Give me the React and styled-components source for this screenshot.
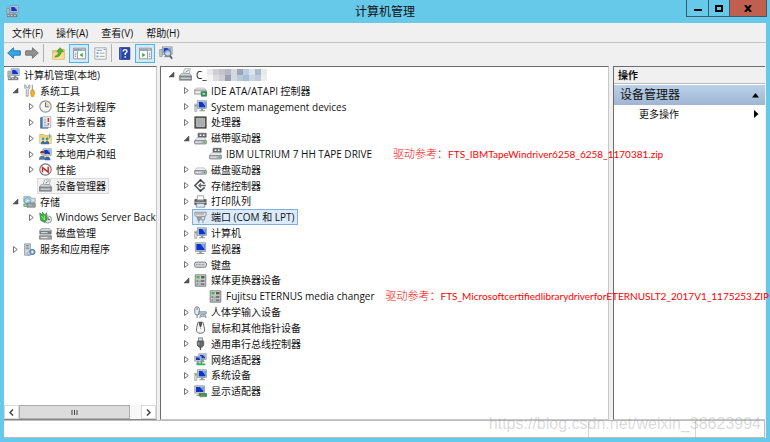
import React from "react";
import styled, { createGlobalStyle, css } from "styled-components";

const uiFont = `"Open Sans", "Noto Sans CJK SC", sans-serif`;

const GlobalStyle = createGlobalStyle`
  * { box-sizing: border-box; }
  html, body, #root { height: 100%; }
  body {
    margin: 0;
    background: #67c9ea;
    color: #111;
    font: 10px/14px ${uiFont};
  }
  button {
    margin: 0;
    padding: 0;
    border: 0;
    background: none;
    color: inherit;
    font: inherit;
  }
  ul { margin: 0; padding: 0; list-style: none; }
  svg { display: block; }
`;

/* ---------- icons ---------- */

const Svg = styled.svg.attrs({ viewBox: "0 0 16 16" })`
  flex: none;
  width: ${(p) => p.$size || 13}px;
  height: ${(p) => p.$size || 13}px;
`;

const Screen = ({ x = 4, y = 1, w = 11, h = 9 }) => (
  <g>
    <rect x={x} y={y} width={w} height={h} fill="#c9d3dc" stroke="#7d8b98" strokeWidth=".8" />
    <rect x={x + 1.4} y={y + 1.4} width={w - 2.8} height={h - 2.8} fill="#1233c4" />
    <path d={`M${x + w / 2} ${y + 1.4}h${w / 2 - 1.4}v${h - 4}z`} fill="#7fa8f2" />
    <path d={`M${x + w / 2 - 1.5} ${y + h}h3v2h-3zM${x + 2} ${y + h + 2}h${w - 4}v1.4h-${w - 4}z`} fill="#8d98a3" />
  </g>
);

const Drive = ({ y = 7 }) => (
  <g>
    <path d={`M3.5 ${y}h9l3 3.5h-15z`} fill="#f0f1f2" stroke="#9a9d9f" strokeWidth=".7" />
    <rect x=".5" y={y + 3.3} width="15" height="4.5" rx="1.4" fill="#b6babd" stroke="#6f7275" strokeWidth=".8" />
    <rect x="2" y={y + 5} width="7" height="1" fill="#eee" />
    <rect x="11.5" y={y + 4.8} width="2.4" height="1.5" fill="#4fae4a" />
  </g>
);

const drawings = {
  console: (
    <>
      <Screen x={5} y={1} w={10} h={8} />
      <path d="M1 4h3v7H1z" fill="#b8c2cb" stroke="#6d7780" strokeWidth=".7" />
      <path d="M1 11.5h13V15H1z" fill="#7d8084" />
      <path d="M2 13h2M6 13h2M10 13h2" stroke="#e8e8e8" />
    </>
  ),
  tools: (
    <>
      <path d="M2 1v4l2 2v8h2.5V7l2-2V1L7 2v2.5H4V2z" fill="#e6e9eb" stroke="#7d8489" strokeWidth=".8" />
      <path d="M11.5 1v7" stroke="#9aa0a5" strokeWidth="1.4" />
      <path d="M10 7.5h3.4l.8 3-1 4.8h-3l-.8-4.8z" fill="#f3b32c" stroke="#bd7c12" strokeWidth=".7" />
    </>
  ),
  clock: (
    <>
      <circle cx="8" cy="8" r="7" fill="#f8f7ef" stroke="#8f989f" strokeWidth="1.4" />
      <path d="M8 8h5.5A5.5 5.5 0 0 0 8 2.5z" fill="#f2d9a0" />
      <path d="M8 3v5.4h4" fill="none" stroke="#436d9c" strokeWidth="1.2" />
    </>
  ),
  events: (
    <>
      <path d="M2 2h9v13H2z" fill="#4f7fb8" stroke="#2d527f" strokeWidth=".8" />
      <path d="M4.5 1h10v13h-10z" fill="#f3f6f9" stroke="#7e8c9b" strokeWidth=".8" />
      <path d="M10.5 2.5h2v5h-2zM10.5 8.8h2v2h-2z" fill="#d42f28" />
      <path d="M6 4h3M6 6h3M6 8h3M6 10h3M6 12h6" stroke="#7995b8" strokeWidth=".9" />
    </>
  ),
  share: (
    <>
      <path d="M1 3h5l1.5 1.5H15V14H1z" fill="#f3d374" stroke="#c19a32" strokeWidth=".8" />
      <path d="M1.5 7h13V14h-13z" fill="#fae7a0" />
      <circle cx="5" cy="8.5" r="1.8" fill="#4a8ed1" />
      <circle cx="10" cy="8.5" r="1.8" fill="#4d9a57" />
      <path d="M2.5 15v-2.5l2.5-2 2.5 2V15zM7.5 15v-2.5l2.5-2 2.5 2V15z" fill="#3e709f" />
      <path d="M13 2v6" stroke="#70a3d3" strokeWidth="1.4" />
    </>
  ),
  users: (
    <>
      <Screen x={5} y={1} w={10} h={8} />
      <circle cx="4" cy="6.5" r="2.5" fill="#e0b084" />
      <path d="M1.5 6Q1.5 3.5 4 3.5T6.5 6z" fill="#5a4131" />
      <path d="M0 14.5q0-5 4-5t4 5z" fill="#4e7f9e" />
      <circle cx="10.5" cy="9" r="2" fill="#e7c197" />
      <path d="M7 15q0-4 3.5-4t3.5 4z" fill="#3565a8" />
    </>
  ),
  perf: (
    <>
      <circle cx="8" cy="8" r="7" fill="#fff" stroke="#76797c" strokeWidth="1.4" />
      <path d="M4.3 11.5v-6l7 5.8V4.5" fill="none" stroke="#d32222" strokeWidth="1.8" />
    </>
  ),
  devices: (
    <>
      <path d="M5 6l2-5h7l-1.5 6z" fill="#f2f4f5" stroke="#8e9599" strokeWidth=".8" />
      <path d="M8 5l4-2.5" stroke="#5fae64" strokeWidth="1.2" />
      <path d="M2.5 7h11l2 3H.5z" fill="#dadde0" stroke="#7b7f83" strokeWidth=".7" />
      <path d="M.5 10h15v5H.5z" fill="#8d9296" stroke="#5f6468" strokeWidth=".7" />
      <path d="M2 12.5h12" stroke="#e5e7e8" strokeWidth="1.2" />
    </>
  ),
  storage: (
    <>
      <path d="M1 2h8l1 2h5v5H1z" fill="#d7dde2" stroke="#828b93" strokeWidth=".8" />
      <circle cx="5.5" cy="7" r="4" fill="#9cd3ea" stroke="#5f8fa5" strokeWidth=".8" />
      <circle cx="5.5" cy="7" r="1.1" fill="#fff" />
      <path d="M5 10h10v5H5z" fill="#a6abaf" stroke="#5f6468" strokeWidth=".8" />
      <path d="M1 11h4v3H1zM11 12.2h2.6" fill="#bcc" stroke="#4da05a" />
    </>
  ),
  backup: (
    <>
      <circle cx="11" cy="10.5" r="4.5" fill="#dfe4e7" stroke="#7e868b" strokeWidth=".9" />
      <path d="M11 7.5v3h2.5" fill="none" stroke="#555" />
      <path d="M.8 2.5l3.4 2V1.2l3 4L9.5 2v9.5L6.5 14 2 11.5z" fill="#3fae3e" stroke="#1f7b26" strokeWidth=".7" />
      <path d="M3 6l3.6 5V5.5" fill="none" stroke="#a9e59d" />
    </>
  ),
  disk: (
    <>
      <path d="M3 2h10l2.5 3H.5z" fill="#dde0e2" stroke="#777b7e" strokeWidth=".8" />
      <path d="M.5 5h15v4H.5z" fill="#77797c" />
      <path d="M3 9h10l2.5 2H.5z" fill="#e7e9ea" stroke="#888" strokeWidth=".6" />
      <path d="M.5 11h15v4H.5z" fill="#a2a5a7" stroke="#666" strokeWidth=".7" />
      <path d="M2.5 7h8M2.5 13h8" stroke="#eee" strokeWidth="1.2" />
    </>
  ),
  services: (
    <>
      <path d="M2 1h7v14H2z" fill="#cfdae3" stroke="#768692" strokeWidth=".9" />
      <path d="M3.5 3h4M3.5 5h4M3.5 7h4" stroke="#6b7f8f" />
      <circle cx="11.5" cy="11" r="3" fill="#a8c9e6" stroke="#4f7aa4" strokeWidth="1.4" />
      <circle cx="11.5" cy="11" r="1" fill="#fff" />
      <circle cx="7" cy="13" r="1.8" fill="#d7e3ec" stroke="#64839f" strokeWidth=".8" />
    </>
  ),
  ide: (
    <>
      <path d="M3 5h9l3 2.5H.5z" fill="#f2f2f2" stroke="#999" strokeWidth=".7" />
      <path d="M.5 7.5H15v5H.5z" fill="#ccced0" stroke="#85888a" strokeWidth=".8" />
      <path d="M2 10h6" stroke="#fff" strokeWidth="1.3" />
      <path d="M9 9.5h6.5V15H9z" fill="#2f9a57" stroke="#17653a" strokeWidth=".7" />
      <path d="M10.5 11h3v2h-3z" fill="#b0e4c2" />
    </>
  ),
  computer: (
    <>
      <Screen x={4.5} y={1} w={11} h={9.5} />
      <path d="M.8 5h2.8v9H.8z" fill="#d7dadd" stroke="#8e979e" strokeWidth=".7" />
      <path d="M1.2 7h2" stroke="#3aa646" strokeWidth="1.4" />
    </>
  ),
  cpu: (
    <>
      <path d="M.5 .5h15v15H.5z" fill="#3f3f3f" />
      <path d="M1.5 2v12M14.5 2v12M2 1.5h12M2 14.5h12" stroke="#8d8564" strokeDasharray="1 1" strokeWidth=".8" />
      <path d="M3 3h10v10H3z" fill="#a9adb0" stroke="#dcdcdc" strokeWidth=".8" />
    </>
  ),
  tape: (
    <>
      <path d="M5 1.5h10v5H5z" fill="#6c6f72" stroke="#4d5053" strokeWidth=".7" />
      <path d="M7 3h2v2H7zM11 3h2v2h-2z" fill="#fff" />
      <Drive y={7} />
    </>
  ),
  hdd: <Drive y={6} />,
  controller: (
    <>
      <path d="M13 5.8L8 1.2 1.2 8 8 14.8l5-4.6" fill="none" stroke="#55585a" strokeWidth="2" />
      <path d="M6 8h8.5M8.5 5.5L6 8l2.5 2.5" fill="none" stroke="#66696b" strokeWidth="1.6" />
      <path d="M7 .7h2v2.5H7zM7 12.8h2v2.5H7z" fill="#333" />
    </>
  ),
  printer: (
    <>
      <path d="M4 1h8v5H4z" fill="#fff" stroke="#777" strokeWidth=".8" />
      <path d="M1 5.5h2.5V7h9V5.5H15V12H1z" fill="#5d6164" stroke="#3f4244" strokeWidth=".7" />
      <path d="M1.5 9h13" stroke="#c7c9cb" strokeWidth="1.3" />
      <path d="M3.5 10.5h9l1 4.5h-11z" fill="#d5ecf5" stroke="#777" strokeWidth=".8" />
    </>
  ),
  port: (
    <>
      <path d="M1 1.5h14v3.5l-2 2.500H3L1 5z" fill="#d8dadc" stroke="#7c8083" strokeWidth=".9" />
      <path d="M3 3.500h1.200M5.500 3.500h1.200M8 3.500h1.200M10.500 3.500h1.200" stroke="#555" strokeWidth="1.200" />
      <path d="M4 7.500h4l-.6 4H4.800zM6 11.500V15" fill="#a6aaad" stroke="#7c8083" />
      <path d="M8.500 7h5l-.8 4h-3.400zM11 11v4" fill="#dfe2e4" stroke="#84898c" />
    </>
  ),
  monitor: <Screen x={1.5} y={1} w={13} h={10.5} />,
  keyboard: (
    <>
      <rect x=".6" y="5" width="14.8" height="6.5" rx="2.500" fill="#d5d7da" stroke="#686c70" strokeWidth="1" />
      <path d="M2.5 8.200h11" stroke="#9a9a9a" strokeWidth="1.500" strokeDasharray="1.2 .6" />
    </>
  ),
  changer: (
    <>
      <path d="M1.5 1h13v14h-13z" fill="#d9dcda" stroke="#65696a" strokeWidth="1" />
      <path d="M3 2.5h4v3H3z" fill="#45b04b" />
      <path d="M8.5 2.5H13v3H8.5z" fill="#56595b" />
      <path d="M3 7h10v3H3zM3 11.3h10v2.4H3z" fill="#76797b" />
      <path d="M4.5 8.5h4M4.5 12.5h4" stroke="#fff" />
    </>
  ),
  hid: (
    <>
      <rect x="1" y="1" width="5.5" height="10" rx="2.6" fill="#e9edf0" stroke="#5f6e7b" strokeWidth="1" />
      <path d="M3.8 2v3M3.8 11v4" stroke="#5f6e7b" />
      <path d="M6 7h9v3H6z" fill="#b8c7d6" stroke="#63748a" strokeWidth=".8" />
      <path d="M7 14.5q0-3.5 2.5-3.5h3q2.5 0 2.5 3.5l-2-1.5H9z" fill="#dbe3ea" stroke="#5d7388" strokeWidth=".8" />
    </>
  ),
  mouse: (
    <>
      <path d="M5 1.5Q3 8 3 11q0 4 5 4t5-4q0-3-2-9.5" fill="#f5f5f5" stroke="#6c6c6c" strokeWidth="1.2" />
      <path d="M6 1l1.5 6h1L10 1" fill="#555" stroke="#444" />
      <path d="M8 8v2" stroke="#999" />
    </>
  ),
  usb: (
    <>
      <path d="M5.5 1h5v4h-5z" fill="#d5d7d9" stroke="#6a6d70" strokeWidth=".9" />
      <path d="M4 5h8v5l-2 2.5H6L4 10z" fill="#66696c" stroke="#484b4d" strokeWidth=".8" />
      <path d="M8 12v4" stroke="#54575a" strokeWidth="1.6" />
      <path d="M6 6.5v3" stroke="#b4b7ba" />
    </>
  ),
  network: (
    <>
      <Screen x={6} y={1} w={9} h={7} />
      <Screen x={1} y={4} w={8} h={6} />
      <path d="M9 10v4M3 14h11" stroke="#35b254" strokeWidth="2" />
    </>
  ),
  display: (
    <>
      <Screen x={1} y={1} w={12} h={9} />
      <path d="M7 10.5h8.5V14H7z" fill="#3a9b58" stroke="#1e6339" strokeWidth=".7" />
      <path d="M9 11.5h2v1.5H9zM8 14v1.5M10 14v1.5M12 14v1.5" fill="#222" stroke="#b79b41" strokeWidth=".8" />
    </>
  ),
  back: <path d="M.8 8L7.5 2v3.5h7.7v5H7.5V14z" fill="#35a5e4" stroke="#1976b6" />,
  forward: <path d="M15.2 8L8.5 2v3.5H.8v5h7.7V14z" fill="#929292" stroke="#6c6c6c" />,
  up: (
    <>
      <path d="M1 4.5h5L7.5 3H15v12H1z" fill="#f1cf74" stroke="#c49a3c" strokeWidth=".8" />
      <path d="M1.5 7.5h13V15h-13z" fill="#f8df96" />
      <path d="M4 11q4-1 4.5-5.5H6L10 .8l4 4.7h-2.5Q11 12 4 12.5z" fill="#4fb83a" stroke="#2b8225" strokeWidth=".7" />
    </>
  ),
  paneLeft: (
    <>
      <path d="M.5 1.5h15v13H.5z" fill="#fff" stroke="#7b8792" />
      <path d="M1 2h14v3H1z" fill="#98a5b2" />
      <path d="M11 3.5h1M13 3.5h1" stroke="#fff" />
      <path d="M5.5 5v9" stroke="#7b8792" />
      <path d="M2 7.5h2M2 9.5h2M2 11.5h2" stroke="#4c83ba" />
      <path d="M12 7v5.5L8 9.7z" fill="#42ad38" />
    </>
  ),
  paneRight: (
    <>
      <path d="M.5 1.5h15v13H.5z" fill="#fff" stroke="#7b8792" />
      <path d="M1 2h14v3H1z" fill="#98a5b2" />
      <path d="M11 3.5h1M13 3.5h1" stroke="#fff" />
      <path d="M10.5 5v9" stroke="#7b8792" />
      <path d="M12 7.5h2M12 9.5h2M12 11.5h2" stroke="#4c83ba" />
      <path d="M4 7v5.5l4-2.8z" fill="#42ad38" />
    </>
  ),
  properties: (
    <>
      <path d="M1 1h14v14H1z" fill="#fafbfb" stroke="#939ba2" />
      <path d="M3 4h7" stroke="#829bb5" strokeWidth="1.2" />
      <path d="M3 6.5h2.5v2H3zM3 10.5h2.5v2H3z" fill="#73a3cf" />
      <path d="M7 7.5h6M7 11.5h6" stroke="#99a2ab" strokeWidth="1.2" />
      <path d="M12 3h2" stroke="#777" />
    </>
  ),
  help: (
    <>
      <path d="M2 .8h12.5v14.4H2z" fill="#2747ad" stroke="#172e7d" />
      <path d="M3.5 1v14" stroke="#7e98dc" />
      <path d="M6.5 5.5q0-2.3 2.3-2.3t2.3 2q0 1.6-2.2 2.8v1.8" fill="none" stroke="#fff" strokeWidth="1.7" />
      <path d="M8 11.5h1.8v1.7H8z" fill="#fff" />
    </>
  ),
  scan: (
    <>
      <Screen x={4} y={1} w={11} h={8.5} />
      <path d="M.8 4h2.8v8H.8z" fill="#c4cad0" stroke="#7c858d" strokeWidth=".7" />
      <circle cx="10" cy="8" r="3.5" fill="#cfe6f5" fillOpacity=".8" stroke="#747d85" strokeWidth="1.2" />
      <path d="M12.5 11l2.5 3.5" stroke="#5c6165" strokeWidth="2" />
    </>
  ),
};

const Icon = ({ name, size }) => (
  <Svg $size={size} aria-hidden="true">
    {drawings[name]}
  </Svg>
);

/* ---------- window frame ---------- */

const Window = styled.div`
  display: flex;
  flex-direction: column;
  min-height: 100%;
  padding: 0 4px 4px;
  background: #67c9ea;
`;

const TitleBar = styled.header`
  display: grid;
  grid-template-columns: 1fr auto 1fr;
  height: 23px;
`;

const TitleIcon = styled.span`
  align-self: center;
  padding-left: 2px;
`;

const Title = styled.h1`
  margin: 0;
  font-size: 12px;
  line-height: 23px;
  font-weight: 400;
`;

const WindowButtons = styled.div`
  display: flex;
  justify-self: end;
  height: 17px;
  margin-right: -1px;
  border: 1px solid #3c5a68;
  border-top: 0;
`;

const WindowButton = styled.button`
  display: grid;
  place-items: center;
  width: ${(p) => (p.$close ? 37 : 21)}px;
  background: ${(p) => (p.$close ? "#c05f50" : "transparent")};
  & + & {
    border-left: 1px solid #3c5a68;
  }
`;

const Client = styled.div`
  flex: 1;
  display: flex;
  flex-direction: column;
  background: #f0f0f0;
`;

const MenuBar = styled.nav`
  display: flex;
  gap: 13px;
  height: 20px;
  padding-left: 8px;
  border-bottom: 1px solid #c4c4c4;
`;

const MenuItem = styled.button`
  line-height: 18px;
`;

const ToolBar = styled.div`
  display: flex;
  align-items: center;
  gap: 4px;
  height: 23px;
  padding: 0 3px 3px;
`;

const ToolButton = styled.button`
  display: grid;
  place-items: center;
  width: ${(p) => (p.$on ? 20 : 14)}px;
  height: 19px;
  ${(p) =>
    p.$on &&
    css`
      background: #d3e9f8;
      border: 1px solid #52b4e4;
    `}
`;

const Divider = styled.span`
  width: 1px;
  height: 18px;
  margin-right: ${(p) => p.$gap}px;
  background: #b0b0b0;
`;

/* ---------- panes ---------- */

const Panes = styled.main`
  flex: 1;
  display: grid;
  grid-template-columns: 153px minmax(0, 1fr) 153px;
  column-gap: 3px;
  padding-right: 1px;
`;

const Pane = styled.section`
  display: flex;
  flex-direction: column;
  min-width: 0;
  background: #fff;
  border: 1px solid #c8c8c8;
  border-top-color: #6c6c6c;
  border-left-color: #6c6c6c;
  ${(p) => p.$first && "overflow: hidden; border-left: 0; border-bottom-color: #888;"}
  ${(p) => p.$last && "margin-left: 1px; border-right: 0;"}
`;

// rows share the height of the list evenly
const Tree = styled.ul`
  display: flex;
  flex-direction: column;
  height: ${(p) => p.$height}px;
`;

const Row = styled.li`
  flex: 1 1 0;
  min-height: 0;
  display: flex;
  align-items: center;
  padding-left: ${(p) => p.$indent}px;
  white-space: nowrap;
`;

const Expander = styled.button`
  flex: none;
  display: grid;
  place-items: center;
  width: 8px;
  height: 12px;
  margin-right: 2px;
`;

const Spacer = styled.span`
  flex: none;
  width: 10px;
`;

const Item = styled.span`
  flex: none;
  display: flex;
  align-items: center;
  gap: 4px;
  height: 16px;
  padding: 0 2px 0 1px;
  border: 1px solid transparent;
  ${(p) => p.$tone === "gray" && "background: #f2f2f2; border-color: #dcdcdc;"}
  ${(p) => p.$tone === "blue" && "background: #dcebfc; border-color: #84acdd;"}
`;

const Masked = styled.span`
  display: flex;
  align-items: center;
`;

const Note = styled.span`
  position: relative;
  z-index: 2;
  margin-left: ${(p) => p.$gap}px;
  color: #f00;
  font: 300 11px/14px Lato, "Noto Sans CJK SC", sans-serif;
`;

const NoteFile = styled.span`
  font-size: 10px;
  font-weight: 400;
`;

const Scroll = styled.div`
  display: flex;
  height: 14px;
  margin-top: auto;
  background: #f8f8f8;
`;

const ScrollButton = styled.button`
  display: grid;
  place-items: center;
  width: 15px;
  border: 1px solid #dadada;
  background: #fff;
`;

const Track = styled.div`
  flex: 1;
  display: flex;
`;

const Thumb = styled.div`
  display: grid;
  place-items: center;
  width: 91%;
  background: #dcdcdc;
  border: 1px solid #adadad;
`;

const ActionsHead = styled.h2`
  margin: 0;
  padding-left: 4px;
  height: 17px;
  font-size: 10px;
  line-height: 16px;
  background: #f0f0f0;
  border-bottom: 1px solid #bbb;
`;

const ActionButton = styled.button`
  display: flex;
  align-items: center;
  justify-content: space-between;
  padding: 0 6px 0 25px;
  height: 18px;
  ${(p) =>
    p.$group &&
    css`
      height: 20px;
      margin-top: 1px;
      padding-left: 6px;
      font-size: 12px;
      background: linear-gradient(#b9d1ea, #9fb5d1);
    `}
`;

const StatusBar = styled.footer`
  position: relative;
  display: grid;
  grid-template-columns: minmax(0, 1fr) 107px 69px;
  height: 18px;
  margin-right: 1px;
  background: #fff;
  border: 1px solid #bdbdbd;
  border-left: 0;
`;

const StatusCell = styled.span`
  & + & {
    border-left: 1px solid #d5d5d5;
  }
`;

const Watermark = styled.span`
  position: absolute;
  right: 3px;
  bottom: 3px;
  color: rgba(150, 150, 150, 0.35);
  font: 16px/20px "Liberation Sans", sans-serif;
  white-space: nowrap;
`;

const Mosaic = () => (
  <svg width="60" height="12" viewBox="0 0 60 12" shapeRendering="crispEdges" aria-hidden="true">
    {[
      ["#e9e9ee", "#f5f5f5"],
      ["#cfcfd3", "#dcdcdc"],
      ["#c2c5cc", "#cfcdd6"],
      ["#b4b8c6", "#9c9fb2"],
      ["#d2dade", "#cfd9e2"],
      ["#9fa5b6", "#b9c9d8"],
      ["#b7cfe3", "#a9bfd6"],
      ["#dce3ea", "#c7d6e4"],
      ["#a9bccf", "#bfc9d8"],
      ["#e5e9e8", "#eceff0"],
    ].map(([a, b], i) => (
      <g key={i}>
        <rect x={i * 6} width="6" height="6" fill={a} />
        <rect x={i * 6} y="6" width="6" height="6" fill={b} />
      </g>
    ))}
  </svg>
);

const Arrow = ({ open }) => (
  <svg width="7" height="7" viewBox="0 0 7 7" aria-hidden="true">
    {open ? (
      <path d="M6 1v5H1z" fill="#555" stroke="#444" strokeWidth=".5" />
    ) : (
      <path d="M1.5 .5v6l3.8-3z" fill="#fff" stroke="#666" strokeWidth=".9" />
    )}
  </svg>
);

const consoleTree = [
  { label: "计算机管理(本地)", icon: "console", depth: 0, root: true },
  { label: "系统工具", icon: "tools", depth: 1, open: true },
  { label: "任务计划程序", icon: "clock", depth: 2, open: false },
  { label: "事件查看器", icon: "events", depth: 2, open: false },
  { label: "共享文件夹", icon: "share", depth: 2, open: false },
  { label: "本地用户和组", icon: "users", depth: 2, open: false },
  { label: "性能", icon: "perf", depth: 2, open: false },
  { label: "设备管理器", icon: "devices", depth: 2, tone: "gray" },
  { label: "存储", icon: "storage", depth: 1, open: true },
  { label: "Windows Server Back", icon: "backup", depth: 2, open: false },
  { label: "磁盘管理", icon: "disk", depth: 2 },
  { label: "服务和应用程序", icon: "services", depth: 1, open: false },
];

const deviceTree = [
  { label: <Masked>C_<Mosaic /></Masked>, icon: "devices", depth: 0, open: true },
  { label: "IDE ATA/ATAPI 控制器", icon: "ide", depth: 1, open: false },
  { label: "System management devices", icon: "computer", depth: 1, open: false },
  { label: "处理器", icon: "cpu", depth: 1, open: false },
  { label: "磁带驱动器", icon: "tape", depth: 1, open: true },
  {
    label: "IBM ULTRIUM 7 HH TAPE DRIVE",
    icon: "tape",
    depth: 2,
    note: "FTS_IBMTapeWindriver6258_6258_1170381.zip",
    gap: 18,
  },
  { label: "磁盘驱动器", icon: "hdd", depth: 1, open: false },
  { label: "存储控制器", icon: "controller", depth: 1, open: false },
  { label: "打印队列", icon: "printer", depth: 1, open: false },
  { label: "端口 (COM 和 LPT)", icon: "port", depth: 1, open: false, tone: "blue" },
  { label: "计算机", icon: "computer", depth: 1, open: false },
  { label: "监视器", icon: "monitor", depth: 1, open: false },
  { label: "键盘", icon: "keyboard", depth: 1, open: false },
  { label: "媒体更换器设备", icon: "changer", depth: 1, open: true },
  {
    label: "Fujitsu ETERNUS media changer",
    icon: "changer",
    depth: 2,
    note: "FTS_MicrosoftcertifiedlibrarydriverforETERNUSLT2_2017V1_1175253.ZIP",
    gap: 8,
  },
  { label: "人体学输入设备", icon: "hid", depth: 1, open: false },
  { label: "鼠标和其他指针设备", icon: "mouse", depth: 1, open: false },
  { label: "通用串行总线控制器", icon: "usb", depth: 1, open: false },
  { label: "网络适配器", icon: "network", depth: 1, open: false },
  { label: "系统设备", icon: "computer", depth: 1, open: false },
  { label: "显示适配器", icon: "display", depth: 1, open: false },
];

const TreeView = ({ rows, height, base, step }) => (
  <Tree $height={height}>
    {rows.map((row, i) => (
      <Row key={i} $indent={row.root ? 1 : base + step * row.depth}>
        {row.open !== undefined && (
          <Expander aria-label={row.open ? "折叠" : "展开"} aria-expanded={row.open}>
            <Arrow open={row.open} />
          </Expander>
        )}
        {row.open === undefined && !row.root && <Spacer />}
        <Item $tone={row.tone}>
          <Icon name={row.icon} />
          {row.label}
        </Item>
        {row.note && (
          <Note $gap={row.gap}>
            驱动参考：<NoteFile>{row.note}</NoteFile>
          </Note>
        )}
      </Row>
    ))}
  </Tree>
);

const App = () => {
  return (
    <>
      <GlobalStyle />
      <Window>
        <TitleBar>
          <TitleIcon>
            <Icon name="console" />
          </TitleIcon>
          <Title>计算机管理</Title>
          <WindowButtons>
            <WindowButton aria-label="最小化">
              <svg width="8" height="8"><path d="M0 5h8v2H0z" /></svg>
            </WindowButton>
            <WindowButton aria-label="最大化">
              <svg width="8" height="7"><path d="M1 1h6v5H1z" fill="none" stroke="#000" strokeWidth="2" /></svg>
            </WindowButton>
            <WindowButton $close aria-label="关闭">
              <svg width="8" height="7"><path d="M1 0l6 7M7 0L1 7" stroke="#000" strokeWidth="2" /></svg>
            </WindowButton>
          </WindowButtons>
        </TitleBar>
        <Client>
          <MenuBar>
            {["文件(F)", "操作(A)", "查看(V)", "帮助(H)"].map((name) => (
              <MenuItem key={name}>{name}</MenuItem>
            ))}
          </MenuBar>
          <ToolBar>
            <ToolButton aria-label="后退"><Icon name="back" size={14} /></ToolButton>
            <ToolButton aria-label="前进"><Icon name="forward" size={14} /></ToolButton>
            <Divider $gap={3} />
            <ToolButton aria-label="向上"><Icon name="up" /></ToolButton>
            <ToolButton $on aria-label="显示/隐藏控制台树"><Icon name="paneLeft" /></ToolButton>
            <Divider $gap={0} hidden />
            <ToolButton aria-label="属性"><Icon name="properties" /></ToolButton>
            <Divider $gap={1} />
            <ToolButton aria-label="帮助"><Icon name="help" /></ToolButton>
            <ToolButton $on aria-label="显示/隐藏操作窗格"><Icon name="paneRight" /></ToolButton>
            <ToolButton aria-label="扫描检测硬件改动"><Icon name="scan" size={14} /></ToolButton>
          </ToolBar>
          <Panes>
            <Pane $first>
              <TreeView rows={consoleTree} height={190} base={-9} step={16} />
              <Scroll>
                <ScrollButton aria-label="向左滚动">
                  <svg width="5" height="7"><path d="M4 .5l-3 3 3 3" fill="none" stroke="#444" strokeWidth="1.5" /></svg>
                </ScrollButton>
                <Track>
                  <Thumb>
                    <svg width="7" height="5"><path d="M1 0v5M3.5 0v5M6 0v5" stroke="#444" /></svg>
                  </Thumb>
                </Track>
                <ScrollButton aria-label="向右滚动">
                  <svg width="5" height="7"><path d="M1 .5l3 3-3 3" fill="none" stroke="#444" strokeWidth="1.5" /></svg>
                </ScrollButton>
              </Scroll>
            </Pane>
            <Pane>
              <TreeView rows={deviceTree} height={332} base={6} step={15} />
            </Pane>
            <Pane $last>
              <ActionsHead>操作</ActionsHead>
              <ActionButton $group>
                设备管理器
                <svg width="7" height="5"><path d="M0 4.5L3.5 0 7 4.5z" /></svg>
              </ActionButton>
              <ActionButton>
                更多操作
                <svg width="5" height="8"><path d="M0 0l4.5 4L0 8z" /></svg>
              </ActionButton>
            </Pane>
          </Panes>
          <StatusBar>
            <StatusCell />
            <StatusCell />
            <StatusCell />
            <Watermark>https://blog.csdn.net/weixin_38623994</Watermark>
          </StatusBar>
        </Client>
      </Window>
    </>
  );
};

export default App;
